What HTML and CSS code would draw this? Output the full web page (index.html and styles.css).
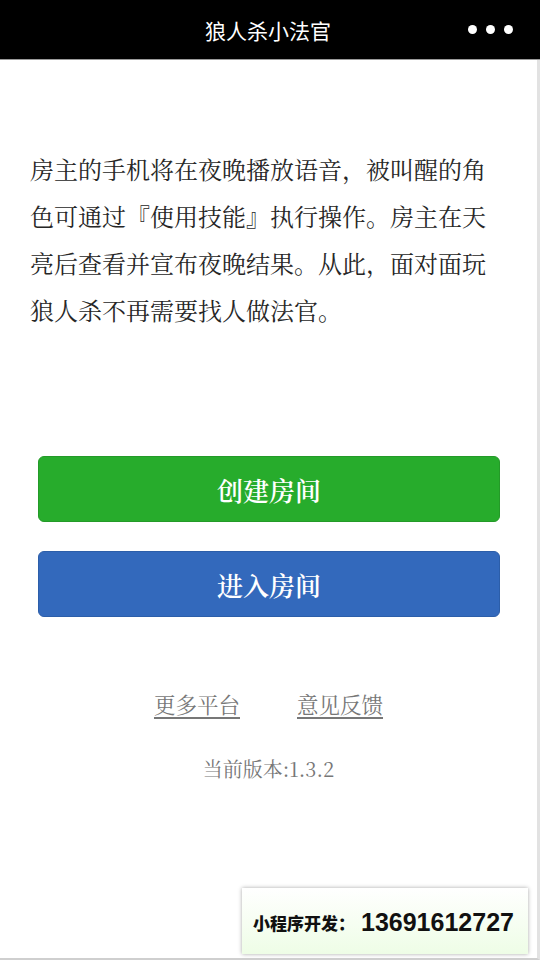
FILE: index.html
```html
<!DOCTYPE html>
<html lang="zh-CN">
<head>
<meta charset="utf-8">
<title>狼人杀小法官</title>
<link rel="stylesheet" href="styles.css">
</head>
<body>
<div class="app">
  <header class="nav">
    <div class="nav-title">狼人杀小法官</div>
    <div class="nav-more"><span class="dot"></span><span class="dot"></span><span class="dot"></span></div>
  </header>
  <main class="page">
    <p class="intro">房主的手机将在夜晚播放语音，被叫醒的角色可通过『使用技能』执行操作。房主在天亮后查看并宣布夜晚结果。从此，面对面玩狼人杀不再需要找人做法官。</p>
    <div class="actions">
      <button class="btn btn-green">创建房间</button>
      <button class="btn btn-blue">进入房间</button>
    </div>
    <div class="links">
      <a class="link">更多平台</a>
      <a class="link">意见反馈</a>
    </div>
    <div class="version">当前版本:1.3.2</div>
    <div class="badge"><span class="badge-cn">小程序开发：</span><span class="badge-num">13691612727</span></div>
  </main>
</div>
</body>
</html>
```
FILE: styles.css
```css
html, body {
  margin: 0;
  padding: 0;
  background: #fff;
}
.app {
  width: 540px;
  height: 960px;
  display: flex;
  flex-direction: column;
  overflow: hidden;
}
.nav {
  height: 60px;
  flex: none;
  background: #000;
  border-bottom: 1px solid #9a9a9a;
  box-sizing: border-box;
  display: flex;
  align-items: center;
  justify-content: center;
  position: relative;
}
.nav-title {
  color: #fff;
  font-family: "Noto Sans CJK SC", sans-serif;
  font-size: 21px;
  margin-left: -4px;
}
.nav-more {
  position: absolute;
  right: 27px;
  top: 25px;
  display: flex;
  gap: 9px;
}
.dot {
  width: 9px;
  height: 9px;
  border-radius: 50%;
  background: #fff;
}
.page {
  flex: 1;
  position: relative;
  border-right: 3px solid #e2e2e2;
  border-bottom: 2px solid #cfcfcf;
  display: flex;
  flex-direction: column;
  align-items: center;
  font-family: "Noto Serif CJK SC", "Liberation Serif", "Noto Sans CJK SC", serif;
}
.intro {
  margin: 85px 0 0 0;
  padding: 0 40px 0 30px;
  width: 470px;
  font-size: 24px;
  line-height: 47px;
  color: #262626;
  box-sizing: content-box;
  align-self: flex-start;
}
.actions {
  margin-top: 123px;
  display: flex;
  flex-direction: column;
  gap: 29px;
}
.btn {
  width: 462px;
  height: 66px;
  border-radius: 6px;
  font-family: "Noto Serif CJK SC", "Liberation Serif", "Noto Sans CJK SC", serif;
  font-size: 26px;
  font-weight: 600;
  color: #fff;
  padding: 0;
  margin-left: 1px;
}
.btn-green {
  background: #27ac2c;
  border: 1px solid #249a28;
}
.btn-blue {
  background: #3369bc;
  border: 1px solid #2c5ea9;
}
.links {
  margin-top: 71px;
  display: flex;
  gap: 57px;
}
.link {
  font-size: 21.5px;
  color: #777;
  text-decoration: underline;
  text-underline-offset: 4px;
}
.version {
  margin-top: 35px;
  font-size: 20px;
  color: #777;
}
.badge {
  position: absolute;
  left: 242px;
  bottom: 4px;
  width: 286px;
  height: 66px;
  box-sizing: border-box;
  background: linear-gradient(#ffffff, #eefde6);
  box-shadow: 0 0 4px rgba(0,0,0,0.35);
  display: flex;
  align-items: center;
  padding-left: 11px;
  padding-top: 3px;
  font-family: "Liberation Sans", "Noto Sans CJK SC", sans-serif;
  font-weight: bold;
  color: #111;
}
.badge-cn {
  font-size: 17px;
  font-family: "Noto Sans CJK SC", sans-serif;
  font-weight: 900;
}
.badge-num {
  font-size: 25px;
  margin-left: 6px;
}
```
